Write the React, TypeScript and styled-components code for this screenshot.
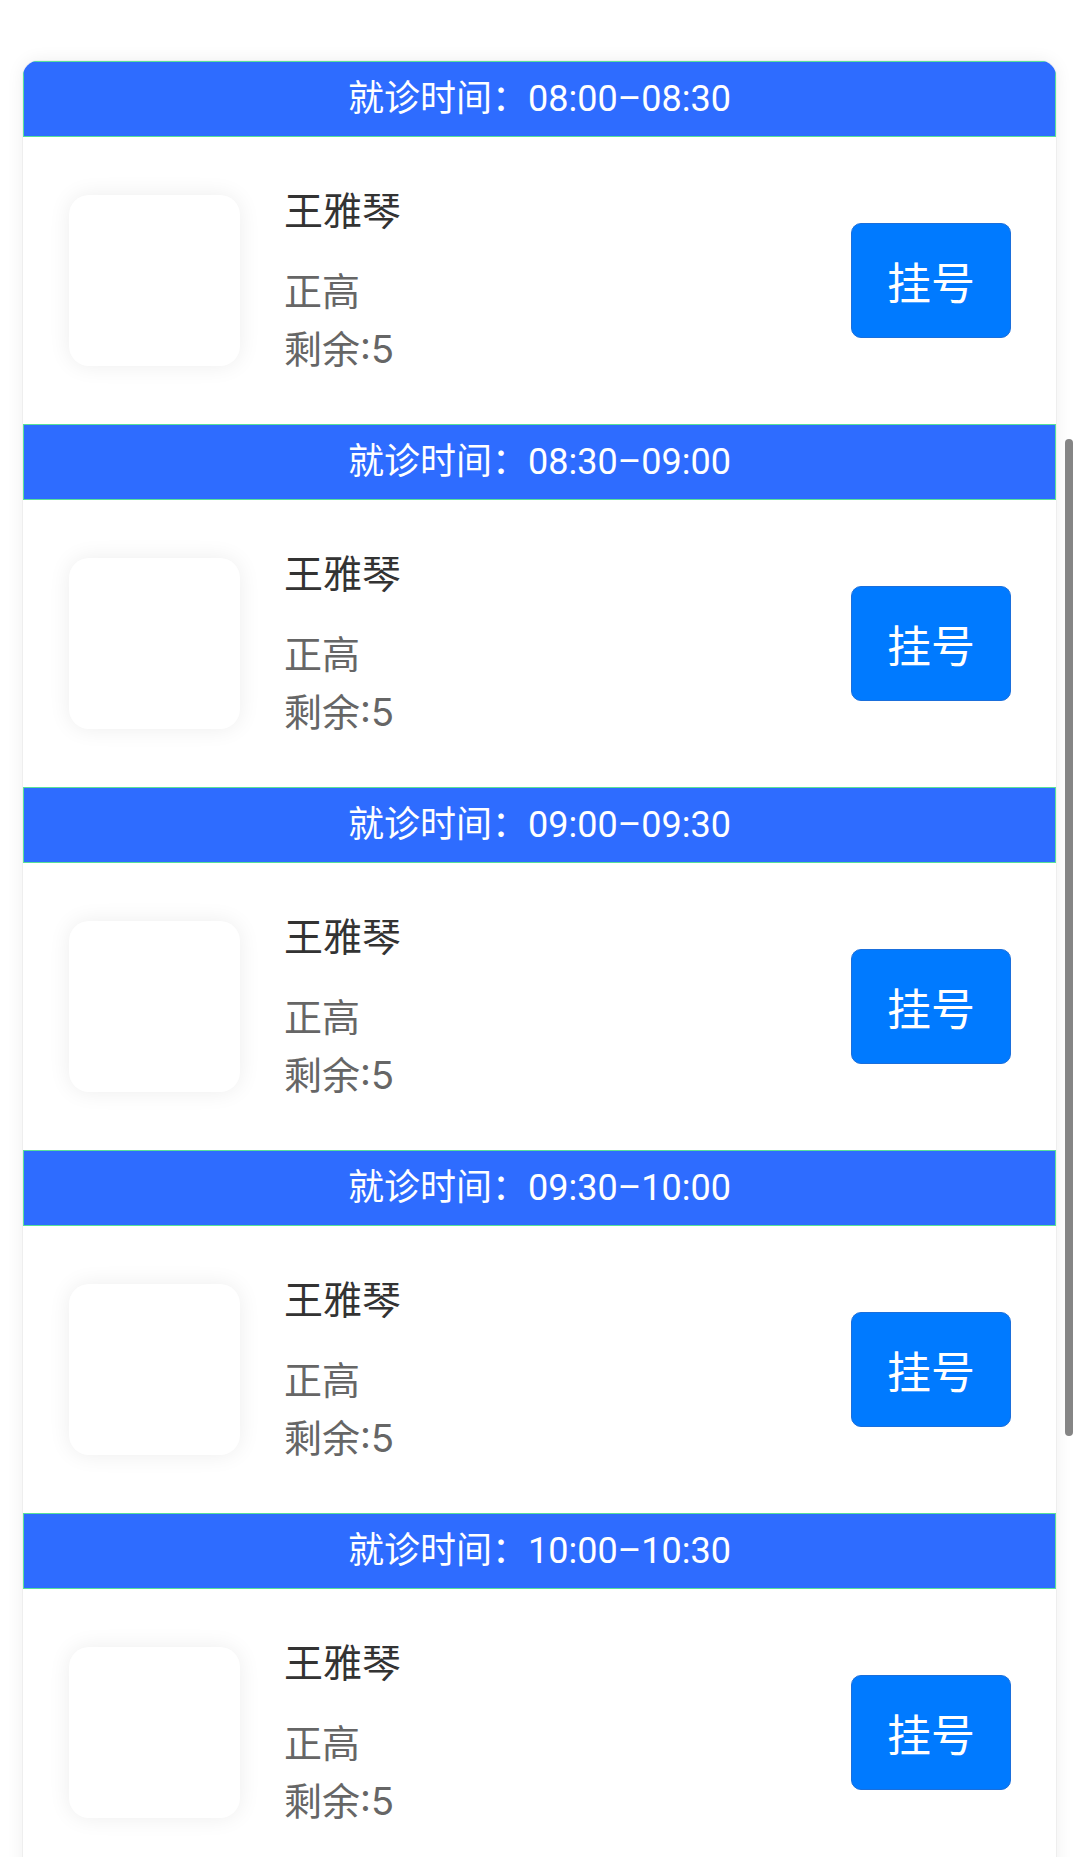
import React from "react";
import styled, { createGlobalStyle } from "styled-components";

const GlobalStyle = createGlobalStyle`
  html, body {
    margin: 0;
    padding: 0;
    height: 100%;
    overflow: hidden;
    background: #ffffff;
  }
  * { box-sizing: border-box; }
  body {
    font-family: "Roboto", "Noto Sans CJK SC", sans-serif;
  }
`;

const Screen = styled.div`
  position: relative;
  height: 100vh;
  overflow: hidden;
  background: #ffffff;
  padding: 61px 24px 0 23px;
`;

const Card = styled.div`
  background: #ffffff;
  border-radius: 15px 15px 0 0;
  overflow: hidden;
  box-shadow: 0 0 0 1px rgba(0, 0, 0, 0.035), 0 0 18px rgba(0, 0, 0, 0.07);
`;

const SlotHeader = styled.div`
  height: 76px;
  display: flex;
  align-items: center;
  justify-content: center;
  background: #2e6cff;
  border: 1px solid #58e09a;
  color: #ffffff;
  font-size: 36px;
  line-height: 1;
  padding-bottom: 1px;
`;

const Row = styled.div`
  height: 287px;
  display: flex;
  align-items: center;
  padding: 0 45px 0 46px;
`;

const Avatar = styled.div`
  width: 171px;
  height: 171px;
  flex: none;
  border-radius: 20px;
  background: #ffffff;
  box-shadow: 0 0 22px rgba(0, 0, 0, 0.075);
`;

const Info = styled.div`
  flex: 1;
  display: flex;
  flex-direction: column;
  margin-left: 44px;
  padding-top: 2px;
  font-family: "Inter", "Noto Sans CJK SC", sans-serif;
`;

const Name = styled.div`
  font-size: 39px;
  line-height: 51px;
  color: #333333;
  margin-bottom: 26px;
`;

const Detail = styled.div`
  font-size: 38px;
  line-height: 58px;
  color: #666666;
`;

const RegisterButton = styled.button`
  width: 160px;
  height: 115px;
  flex: none;
  border-radius: 10px;
  border: 1px solid #1a6fdc;
  background: #007aff;
  color: #ffffff;
  font-family: "Noto Sans CJK SC", sans-serif;
  font-size: 44px;
  padding: 0;
  display: flex;
  align-items: center;
  justify-content: center;
`;

const ScrollThumb = styled.div`
  position: absolute;
  left: 1065px;
  top: 439px;
  width: 8px;
  height: 997px;
  border-radius: 4px;
  background: #858585;
`;

const slots = [
  "08:00–08:30",
  "08:30–09:00",
  "09:00–09:30",
  "09:30–10:00",
  "10:00–10:30",
];

export default function App() {
  return (
    <>
      <GlobalStyle />
      <Screen>
        <Card>
          {slots.map((t) => (
            <React.Fragment key={t}>
              <SlotHeader>就诊时间：{t}</SlotHeader>
              <Row>
                <Avatar />
                <Info>
                  <Name>王雅琴</Name>
                  <Detail>正高</Detail>
                  <Detail>剩余:5</Detail>
                </Info>
                <RegisterButton>挂号</RegisterButton>
              </Row>
            </React.Fragment>
          ))}
        </Card>
        <ScrollThumb />
      </Screen>
    </>
  );
}
